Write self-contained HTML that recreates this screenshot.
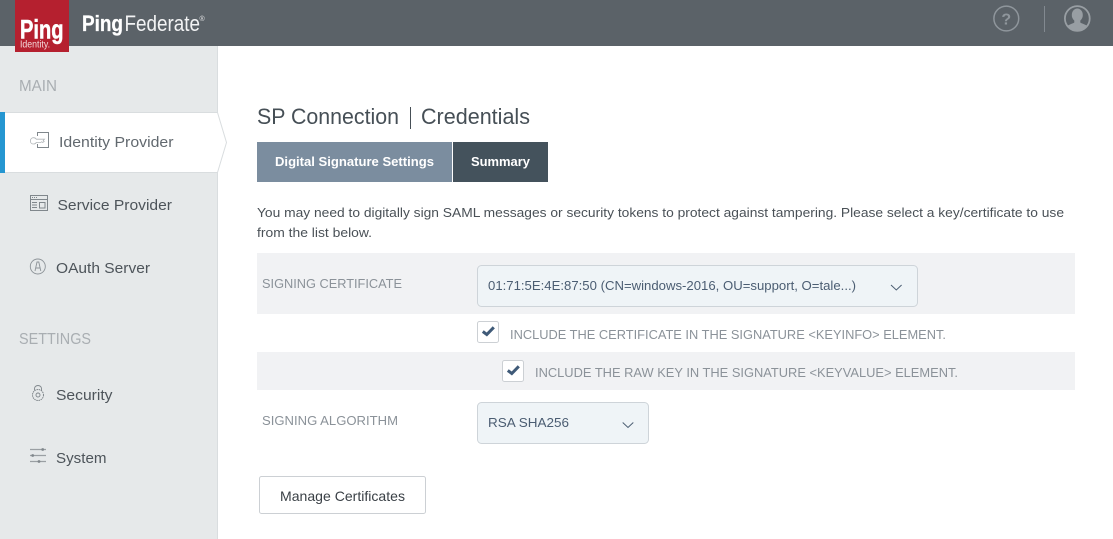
<!DOCTYPE html>
<html><head><meta charset="utf-8"><style>
html,body{margin:0;padding:0;width:1113px;height:539px;overflow:hidden;background:#fff}
svg{display:block}
text{font-family:"Liberation Sans",sans-serif;white-space:pre}
</style></head><body>
<svg width="1113" height="539" viewBox="0 0 1113 539" xmlns="http://www.w3.org/2000/svg">
<defs><clipPath id="u"><circle cx="1077.3" cy="18.5" r="12"/></clipPath></defs>
<rect width="1113" height="539" fill="#fff"/>
<!-- sidebar -->
<rect x="0" y="46" width="217" height="493" fill="#e6e9ea"/>
<rect x="217" y="46" width="1" height="493" fill="#d9dddf"/>
<!-- active item -->
<path d="M0 112.5H217.5L226.5 142.500L217.500 172.500H0Z" fill="#fff" stroke="#d9dddf" stroke-width="1"/>
<rect x="0" y="112" width="5" height="61" fill="#2596d1"/>
<!-- header -->
<rect width="1113" height="46" fill="#5b6268"/>
<rect x="15" y="0" width="54" height="52" fill="#b5202f"/>
<text x="20" y="38.500" font-size="27" font-weight="bold" fill="#fff" stroke="#fff" stroke-width=".5" textLength="43.500" lengthAdjust="spacingAndGlyphs">Ping</text>
<text x="20" y="47.500" font-size="10" fill="#f3d9dc" textLength="30" lengthAdjust="spacingAndGlyphs">Identity.</text>
<text x="82" y="31" font-size="22" font-weight="bold" fill="#fff" stroke="#fff" stroke-width=".3" textLength="41" lengthAdjust="spacingAndGlyphs">Ping</text>
<text x="124.500" y="31" font-size="22.500" fill="#f2f3f4" textLength="75.500" lengthAdjust="spacingAndGlyphs">Federate</text>
<text x="199.500" y="21" font-size="7" fill="#e8e9ea">®</text>
<!-- header icons -->
<circle cx="1006.3" cy="18.500" r="12.400" fill="none" stroke="#8f969c" stroke-width="1.500"/>
<text x="1006.3" y="24.500" font-size="16" font-weight="bold" fill="#8f969c" text-anchor="middle">?</text>
<rect x="1044" y="6" width="1" height="26" fill="#828990"/>
<circle cx="1077.3" cy="18.500" r="12.400" fill="none" stroke="#989ea3" stroke-width="1.800"/>
<g clip-path="url(#u)" fill="#989ea3">
<ellipse cx="1077.3" cy="15" rx="5.500" ry="6.500"/>
<path d="M1074.300 19H1080.300V22.500C1082 23.800 1086 24.500 1088 26.500V32H1066.600V26.500C1068.600 24.500 1072.600 23.800 1074.300 22.500Z"/>
</g>
<!-- sidebar text -->
<text x="19" y="91" font-size="15.500" fill="#a9aeb2" textLength="38" lengthAdjust="spacingAndGlyphs">MAIN</text>
<text x="59" y="147" font-size="15" fill="#62696f" textLength="114.500" lengthAdjust="spacingAndGlyphs">Identity Provider</text>
<text x="57.500" y="210" font-size="15" fill="#4d545a" textLength="114.500" lengthAdjust="spacingAndGlyphs">Service Provider</text>
<text x="56" y="273" font-size="15" fill="#4d545a" textLength="94" lengthAdjust="spacingAndGlyphs">OAuth Server</text>
<text x="19" y="344" font-size="15.500" fill="#a9aeb2" textLength="72" lengthAdjust="spacingAndGlyphs">SETTINGS</text>
<text x="56" y="400" font-size="15" fill="#4d545a" textLength="56.500" lengthAdjust="spacingAndGlyphs">Security</text>
<text x="56" y="463" font-size="15" fill="#4d545a" textLength="50.500" lengthAdjust="spacingAndGlyphs">System</text>
<!-- sidebar icons -->
<g fill="none" stroke="#80878c" stroke-width="1">
<path d="M37.500 136V132.500H48.500V147.500H37.500V144" stroke-width="1"/>
<path d="M30.500 140.500c0-1.600 1.300-2.800 3-2.800 1.300 0 2.300.6 2.800 1.500H44.500l-1.300 1.300 1 1-1.500 1-1-.8-1 .8H36.300c-.5.9-1.500 1.500-2.800 1.500-1.700 0-3-1-3-2.500z" stroke="#b0b5b8" stroke-width=".8"/>
<rect x="30.500" y="195.500" width="17" height="15"/>
<path d="M30.500 199.500H47.500"/>
<path d="M32 197.500H37" stroke-dasharray="1 1"/>
<path d="M32 202.500H37M32 205H37M32 207.500H37"/>
<rect x="39.500" y="202.500" width="5.500" height="5.500"/>
<circle cx="37.800" cy="266.500" r="7.500" stroke="#8d9398" stroke-width=".9"/>
<path d="M35 271L37 262H38.800L40.800 271M35.800 268H40" stroke="#8d9398" stroke-width=".9"/>
<path d="M34.500 390.500V388.500a3.500 3 0 0 1 7 0V390.500" stroke-width=".9"/>
<circle cx="38" cy="395" r="5.500" stroke-width="1" stroke-dasharray="1.500 .7"/>
<circle cx="38" cy="395" r="2" stroke-width=".9"/>
<path d="M30 449.500H46M30 455.500H46M30 461.500H46" stroke="#9a9fa3" stroke-width="1.200"/>
</g>
<g fill="#80878c"><circle cx="42.700" cy="449.500" r="1.400"/><circle cx="32.700" cy="455.500" r="1.400"/><circle cx="39" cy="461.500" r="1.400"/></g>
<!-- title -->
<text x="257" y="124" font-size="22" fill="#464f56" textLength="142" lengthAdjust="spacingAndGlyphs">SP Connection</text>
<rect x="410" y="107" width="1" height="22" fill="#464f56"/>
<text x="421" y="124" font-size="22" fill="#464f56" textLength="109" lengthAdjust="spacingAndGlyphs">Credentials</text>
<!-- tabs -->
<rect x="257" y="142" width="195" height="40" fill="#7b8d9f"/>
<rect x="453" y="142" width="95" height="40" fill="#44525c"/>
<text x="275" y="166" font-size="13" font-weight="bold" fill="#fff" textLength="159" lengthAdjust="spacingAndGlyphs">Digital Signature Settings</text>
<text x="471" y="166" font-size="13" font-weight="bold" fill="#fff" textLength="59" lengthAdjust="spacingAndGlyphs">Summary</text>
<!-- paragraph -->
<text x="257" y="217" font-size="13" fill="#4a5157" textLength="807" lengthAdjust="spacingAndGlyphs">You may need to digitally sign SAML messages or security tokens to protect against tampering. Please select a key/certificate to use</text>
<text x="257" y="237" font-size="13" fill="#4a5157" textLength="115" lengthAdjust="spacingAndGlyphs">from the list below.</text>
<!-- rows -->
<rect x="257" y="253" width="818" height="61" fill="#f1f2f4"/>
<rect x="257" y="352" width="818" height="38" fill="#f1f2f4"/>
<text x="262" y="288" font-size="13" fill="#8b9299" textLength="140" lengthAdjust="spacingAndGlyphs">SIGNING CERTIFICATE</text>
<rect x="477.500" y="265.500" width="440" height="41" rx="4" fill="#eff4f7" stroke="#ced4d9"/>
<text x="488" y="290" font-size="13" fill="#4b5d72" textLength="368" lengthAdjust="spacingAndGlyphs">01:71:5E:4E:87:50 (CN=windows-2016, OU=support, O=tale...)</text>
<path d="M891 285L896.300 290L901.600 285" fill="none" stroke="#4b5d72" stroke-width="1"/>
<rect x="477.500" y="321.500" width="21" height="21" rx="2" fill="#fff" stroke="#ccd0d4"/>
<path d="M482.800 331.500L486.800 334.500L493.800 327.300" fill="none" stroke="#3f5a78" stroke-width="3"/>
<text x="510" y="339" font-size="13" fill="#8b9299" textLength="436" lengthAdjust="spacingAndGlyphs">INCLUDE THE CERTIFICATE IN THE SIGNATURE &lt;KEYINFO&gt; ELEMENT.</text>
<rect x="502.500" y="360.500" width="21" height="21" rx="2" fill="#fff" stroke="#ccd0d4"/>
<path d="M507.800 370.500L511.800 373.500L518.800 366.300" fill="none" stroke="#3f5a78" stroke-width="3"/>
<text x="535" y="377" font-size="13" fill="#8b9299" textLength="423" lengthAdjust="spacingAndGlyphs">INCLUDE THE RAW KEY IN THE SIGNATURE &lt;KEYVALUE&gt; ELEMENT.</text>
<text x="262" y="425" font-size="13" fill="#8b9299" textLength="136" lengthAdjust="spacingAndGlyphs">SIGNING ALGORITHM</text>
<rect x="477.500" y="402.500" width="171" height="41" rx="4" fill="#eff4f7" stroke="#ced4d9"/>
<text x="488" y="427" font-size="13" fill="#4b5d72" textLength="81" lengthAdjust="spacingAndGlyphs">RSA SHA256</text>
<path d="M622.700 422.500L628 427.500L633.300 422.500" fill="none" stroke="#4b5d72" stroke-width="1"/>
<!-- button -->
<rect x="259.500" y="476.500" width="166" height="37" rx="2" fill="#fff" stroke="#ccd0d4"/>
<text x="280" y="501" font-size="14" fill="#3a4046" textLength="125" lengthAdjust="spacingAndGlyphs">Manage Certificates</text>
</svg>
</body></html>
